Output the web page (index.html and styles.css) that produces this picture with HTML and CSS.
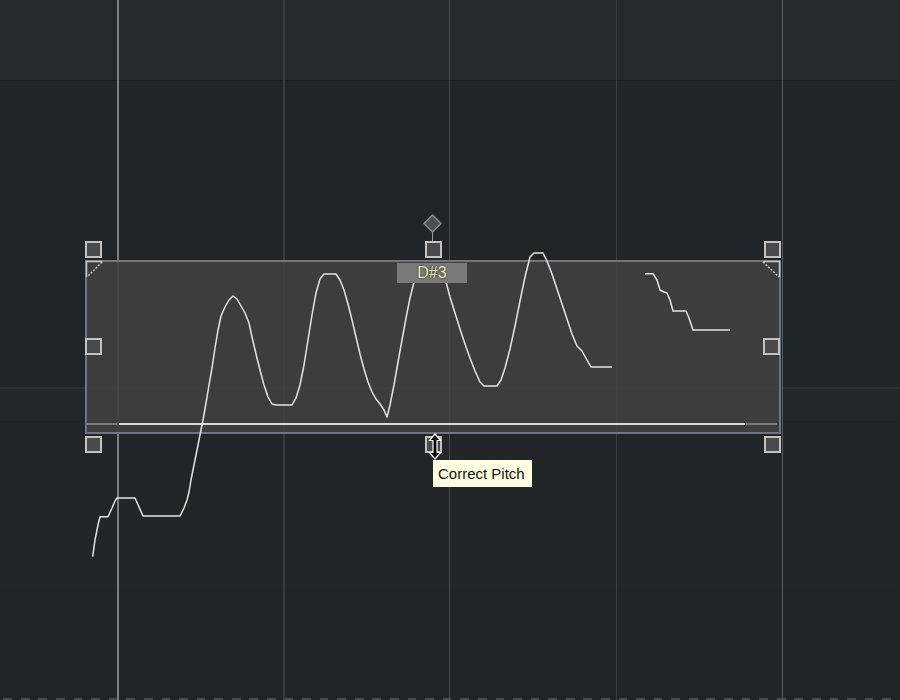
FILE: index.html
```html
<!DOCTYPE html>
<html>
<head>
<meta charset="utf-8">
<link rel="stylesheet" href="styles.css">
</head>
<body>
<div class="editor">
  <div class="grid">
    <div class="col col-first"></div>
    <div class="col col-bar"></div>
    <div class="col col-beat"></div>
    <div class="col col-half"></div>
    <div class="col col-beat2"></div>
    <div class="col col-last"></div>
  </div>
  <div class="dashes"></div>

  <div class="selection">
    <div class="handle-row">
      <div class="handle"></div>
      <div class="handle"></div>
      <div class="handle"></div>
    </div>
    <div class="box">
      <div class="handle handle-ml"></div>
      <div class="handle handle-mr"></div>
      <div class="note-label">D#3</div>
      <div class="range">
        <div class="range-side"></div>
        <div class="range-main"></div>
        <div class="range-side range-side-r"></div>
      </div>
    </div>
    <div class="handle-row">
      <div class="handle"></div>
      <div class="handle"></div>
      <div class="handle"></div>
    </div>
  </div>

  <svg class="curve" width="900" height="700" viewBox="0 0 900 700">
    <path class="pitch" d="M92.7,556.7 L95,540 L98,525 L100,516.7 L108,516.7 L112,508 L115,501 L117,498 L135,498 L139,507 L143,516 L180,516 L184,508 L187,500 L189,492 L191,480 L194,465 L197,450 L200,435 L203,420 L206,403 L209,385 L212,368 L215,348 L218,330 L221,316 L225,307 L229,300 L233,296 L237,299 L241,306 L245,313 L249,323 L252,337 L256,354 L260,370 L264,385 L268,397 L272,404 L276,405 L292,405 L296,398 L300,385 L304,365 L308,340 L312,315 L316,293 L320,279 L324,274 L336,274 L340,280 L344,290 L348,304 L352,320 L356,337 L360,354 L364,369 L368,382 L372,392 L376,399 L380,404 L384,410 L387,417 L390,405 L394,385 L398,362 L402,340 L406,318 L410,298 L414,282 L418,272 L424,267 L432,266 L440,268 L446,282 L450,297 L455,313 L460,329 L465,344 L470,358 L475,371 L480,382 L484,386 L497,386 L501,380 L505,368 L510,349 L515,326 L520,301 L525,277 L530,257 L534,253 L543,253 L547,261 L552,274 L557,289 L562,304 L567,319 L572,334 L577,346 L582,351 L587,360 L591,367 L612,367"/>
    <path class="pitch" d="M645,273.7 L653,273.7 L657,280 L660,290 L664,292 L667,293 L670,300 L673,311 L686,311 L689,318 L693,330 L730,330"/>
    <path class="corner" d="M86.5,277 L86.5,261.5 L102,261.5"/>
    <path class="corner-diag" d="M102,262 L87,277"/>
    <path class="corner" d="M763,261.5 L779.5,261.5 L779.5,277"/>
    <path class="corner-diag" d="M763,262 L779,277"/>
    <line class="stem" x1="432.5" y1="232" x2="432.5" y2="241"/>
    <polygon class="diamond" points="432.5,215 441,223.5 432.5,232 424,223.5"/>
  </svg>

  <div class="tooltip">Correct Pitch</div>

  <svg class="cursor" width="14" height="28" viewBox="0 0 14 28">
    <path d="M7,1 L12.5,7.5 L9,7.5 L9,19.5 L12.5,19.5 L7,26 L1.5,19.5 L5,19.5 L5,7.5 L1.5,7.5 Z"/>
  </svg>
</div>
</body>
</html>
```
FILE: styles.css
```css
html, body {
  margin: 0;
  padding: 0;
  background: #222528;
}

.editor {
  position: relative;
  width: 900px;
  height: 700px;
  overflow: hidden;
  font-family: "Liberation Sans", Arial, sans-serif;
  background: linear-gradient(to bottom,
    #26292c 0px, #26292c 80px,
    #1c1f22 80px, #1c1f22 81px,
    #222528 81px, #222528 387px,
    #2e3134 387px, #2e3134 389px,
    #24272a 389px, #24272a 421px,
    #202326 421px, #202326 422px,
    #232629 422px, #232629 588px,
    #222528 588px);
}

.grid {
  display: flex;
  height: 700px;
}

.col {
  flex: none;
  height: 100%;
  box-sizing: border-box;
}

.col-first { width: 117px; }
.col-bar { width: 166px; border-left: 2px solid #7b7e81; }
.col-beat { width: 166px; border-left: 2px solid #393c3f; }
.col-half { width: 167px; border-left: 1px solid #4c4f52; }
.col-beat2 { width: 166px; border-left: 1px solid #3b3e41; }
.col-last { flex: 1; border-left: 1px solid #5b5e61; }

.dashes {
  position: absolute;
  left: 0;
  bottom: 0;
  width: 900px;
  height: 2px;
  background: repeating-linear-gradient(to right,
    transparent 0px, transparent 3.3px,
    #4b4b4b 3.3px, #4b4b4b 12px,
    transparent 12px, transparent 17.58px);
}

/* selection frame */
.selection {
  position: absolute;
  left: 85px;
  top: 241px;
  width: 696px;
  display: flex;
  flex-direction: column;
  gap: 2px;
}

.handle-row {
  display: flex;
  justify-content: space-between;
  position: relative;
  z-index: 3;
}

.handle {
  width: 17px;
  height: 17px;
  box-sizing: border-box;
  border: 2px solid #c2c2c2;
  background: #4a4a4a;
}

.box {
  position: relative;
  height: 174px;
  box-sizing: border-box;
  border: 2px solid #6f7682;
  background: rgba(64, 64, 64, 0.9);
  display: flex;
  flex-direction: column;
  justify-content: flex-end;
  padding-bottom: 7px;
}

.handle-ml,
.handle-mr {
  position: absolute;
  top: 76px;
  z-index: 3;
}
.handle-ml { left: -2px; }
.handle-mr { right: -1px; }

.range {
  display: flex;
  height: 2px;
}
.range-side {
  width: 30px;
  background: #7a7a7a;
}
.range-main {
  width: 626px;
  margin-left: 2px;
  background: #d9d9d9;
}
.range-side-r {
  width: 31px;
  margin-left: 1px;
}

.note-label {
  position: absolute;
  top: 1px;
  left: 310px;
  width: 70px;
  height: 20px;
  background: #7a7a7a;
  color: #f3edc4;
  font-size: 16px;
  line-height: 20px;
  text-align: center;
  text-shadow: 0 0 1px #3a3520, 0 0 2px #3a3520;
  z-index: 2;
}

/* pitch curve & decorations */
.curve {
  position: absolute;
  left: 0;
  top: 0;
  z-index: 1;
}

.pitch {
  fill: none;
  stroke: #e4e4e4;
  stroke-width: 1.5;
  stroke-linejoin: round;
}

.corner {
  fill: none;
  stroke: #c8c8c8;
  stroke-width: 1.5;
}

.corner-diag {
  fill: none;
  stroke: #c8c8c8;
  stroke-width: 1.5;
  stroke-dasharray: 2 1.5;
}

.stem {
  stroke: #9a9a9a;
  stroke-width: 1;
}

.diamond {
  fill: #4e4e4e;
  stroke: #8c8c8c;
  stroke-width: 1.5;
}

.tooltip {
  position: absolute;
  left: 433px;
  top: 460px;
  width: 99px;
  height: 27px;
  box-sizing: border-box;
  background: #ffffe1;
  color: #111;
  font-size: 15px;
  line-height: 27px;
  padding-left: 5px;
  white-space: nowrap;
  z-index: 4;
}

.cursor {
  position: absolute;
  left: 428px;
  top: 433px;
  z-index: 5;
}
.cursor path {
  fill: #000;
  stroke: #fff;
  stroke-width: 1.2;
  stroke-linejoin: miter;
}
```
